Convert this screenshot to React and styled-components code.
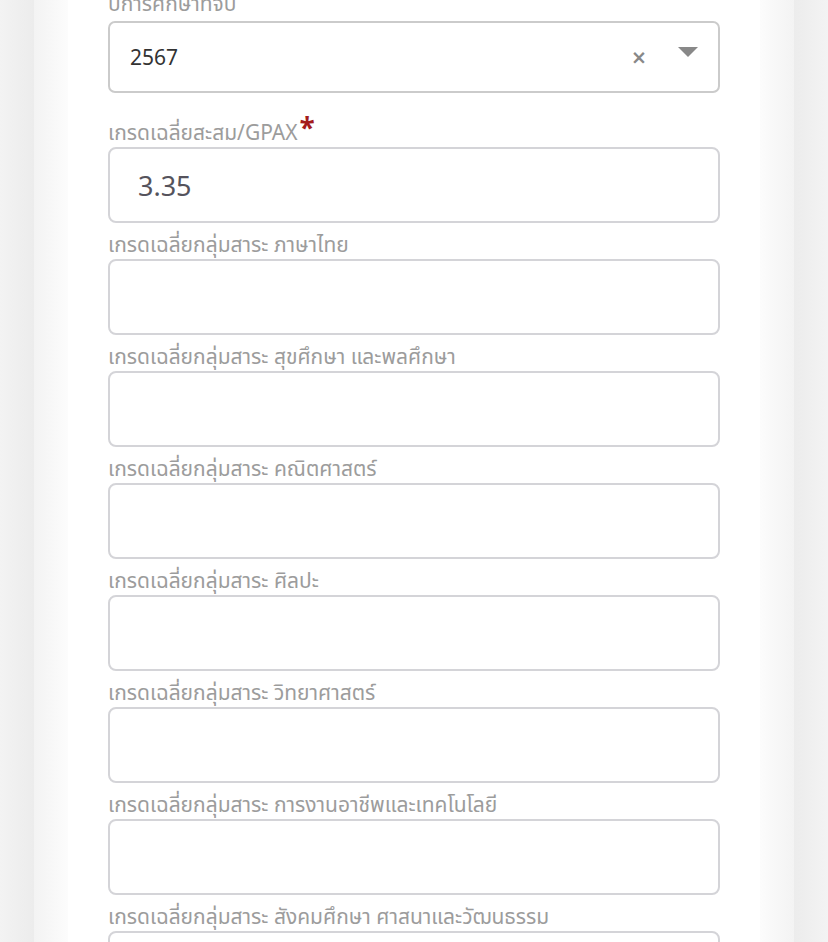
import React from 'react';
import styled, { createGlobalStyle } from 'styled-components';

const GlobalStyle = createGlobalStyle`
	html, body {
		margin: 0;
		padding: 0;
		background: #efefef;
		font-family: "Noto Sans Thai", "Noto Sans", "Liberation Sans", sans-serif;
	}
	* {
		box-sizing: border-box;
	}
`;

const subjects = [
	'เกรดเฉลี่ยกลุ่มสาระ ภาษาไทย',
	'เกรดเฉลี่ยกลุ่มสาระ สุขศึกษา และพลศึกษา',
	'เกรดเฉลี่ยกลุ่มสาระ คณิตศาสตร์',
	'เกรดเฉลี่ยกลุ่มสาระ ศิลปะ',
	'เกรดเฉลี่ยกลุ่มสาระ วิทยาศาสตร์',
	'เกรดเฉลี่ยกลุ่มสาระ การงานอาชีพและเทคโนโลยี',
	'เกรดเฉลี่ยกลุ่มสาระ สังคมศึกษา ศาสนาและวัฒนธรรม',
];

export default function App() {
	return (
		<Page>
			<GlobalStyle />
			<Panel>
				<Card>
					<Form>
						<Field $gap={18}>
							<Label $pad={6}>ปีการศึกษาที่จบ</Label>
							<SelectBox>
								<SelectValue>2567</SelectValue>
								<ClearMark>×</ClearMark>
								<Caret />
							</SelectBox>
						</Field>
						<Field>
							<Label>
								เกรดเฉลี่ยสะสม/GPAX<Star>*</Star>
							</Label>
							<Input defaultValue="3.35" $big />
						</Field>
						{subjects.map((s) => (
							<Field key={s}>
								<Label>{s}</Label>
								<Input />
							</Field>
						))}
					</Form>
				</Card>
			</Panel>
		</Page>
	);
}

const Page = styled.div`
	min-height: 100vh;
	padding: 0 34px;
	background: linear-gradient(to right, #f3f3f3 0, #ececec 34px, #ececec 794px, #f3f3f3 828px);
`;

const Panel = styled.div`
	min-height: 100vh;
	padding: 0 34px;
	background: linear-gradient(to right, #f3f3f3 0, #fcfcfc 34px, #fcfcfc calc(100% - 34px), #f3f3f3 100%);
`;

const Card = styled.div`
	background: #ffffff;
	min-height: 100vh;
	padding: 0 40px 40px;
`;

const Form = styled.div`
	display: flex;
	flex-direction: column;
	margin-top: -15px;
`;

const Field = styled.div`
	display: flex;
	flex-direction: column;
	margin-bottom: ${(p) => p.$gap || 0}px;
`;

const Label = styled.label`
	display: flex;
	align-items: flex-end;
	height: 36px;
	padding-bottom: ${(p) => p.$pad || 3}px;
	font-size: 21px;
	line-height: 1;
	color: #9c9c9c;
	white-space: nowrap;
`;

const Star = styled.span`
	color: #a41c1c;
	font-size: 28px;
	font-weight: 700;
	align-self: flex-start;
	margin-top: 5px;
	margin-left: 2px;
`;

const SelectBox = styled.div`
	position: relative;
	display: flex;
	align-items: center;
	height: 72px;
	padding: 0 20px;
	border: 2px solid #cbcbcb;
	border-radius: 7px;
	background: #ffffff;
`;

const SelectValue = styled.span`
	flex: 1;
	font-size: 21px;
	color: #333333;
	font-family: "Noto Sans", "Liberation Sans", sans-serif;
`;

const ClearMark = styled.span`
	font-size: 19px;
	font-weight: 700;
	color: #888888;
	margin-right: 31px;
	margin-top: 0;
	font-family: "DejaVu Sans", sans-serif;
`;

const Caret = styled.span`
	align-self: flex-start;
	margin-top: 24px;
	width: 0;
	height: 0;
	border-left: 10px solid transparent;
	border-right: 10px solid transparent;
	border-top: 10px solid #888888;
`;

const Input = styled.input`
	height: 76px;
	width: 100%;
	padding: 0 28px;
	border: 2px solid #d4d4d8;
	border-radius: 8px;
	background: #ffffff;
	font-family: "Noto Sans", "Liberation Sans", sans-serif;
	font-size: ${(p) => (p.$big ? '27px' : '20px')};
	color: #55535c;
	outline: none;
`;
